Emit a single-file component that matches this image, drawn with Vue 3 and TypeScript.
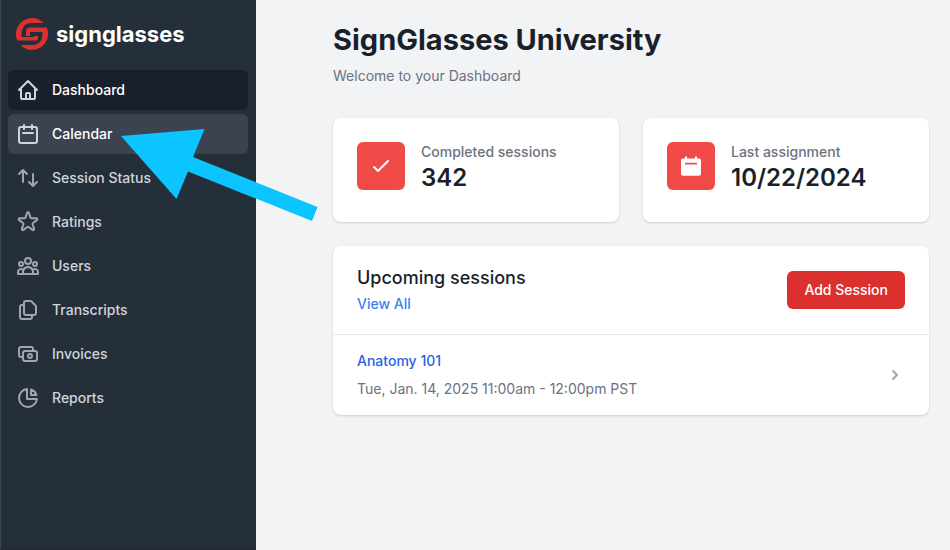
<script setup lang="ts">
interface NavItem {
  label: string
  state?: 'active' | 'highlighted'
  paths: string[]
}

interface Session {
  name: string
  time: string
}

const navItems: NavItem[] = [
  {
    label: 'Dashboard',
    state: 'active',
    paths: [
      'M3 12l2-2m0 0l7-7 7 7M5 10v10a1 1 0 001 1h3m10-11l2 2m-2-2v10a1 1 0 01-1 1h-3m-6 0a1 1 0 001-1v-4a1 1 0 011-1h2a1 1 0 011 1v4a1 1 0 001 1m-6 0h6',
    ],
  },
  {
    label: 'Calendar',
    state: 'highlighted',
    paths: [
      'M8 7V3m8 4V3m-9 8h10M5 21h14a2 2 0 002-2V7a2 2 0 00-2-2H5a2 2 0 00-2 2v12a2 2 0 002 2z',
    ],
  },
  {
    label: 'Session Status',
    paths: ['M7 16V4m0 0L3 8m4-4l4 4m6 0v12m0 0l4-4m-4 4l-4-4'],
  },
  {
    label: 'Ratings',
    paths: [
      'M11.049 2.927c.3-.921 1.603-.921 1.902 0l1.519 4.674a1 1 0 00.95.69h4.915c.969 0 1.371 1.24.588 1.81l-3.976 2.888a1 1 0 00-.363 1.118l1.518 4.674c.3.922-.755 1.688-1.538 1.118l-3.976-2.888a1 1 0 00-1.176 0l-3.976 2.888c-.783.57-1.838-.197-1.538-1.118l1.518-4.674a1 1 0 00-.363-1.118l-3.976-2.888c-.784-.57-.38-1.81.588-1.81h4.914a1 1 0 00.951-.69l1.519-4.674z',
    ],
  },
  {
    label: 'Users',
    paths: [
      'M17 20h5v-2a3 3 0 00-5.356-1.857M17 20H7m10 0v-2c0-.656-.126-1.283-.356-1.857M7 20H2v-2a3 3 0 015.356-1.857M7 20v-2c0-.656.126-1.283.356-1.857m0 0a5.002 5.002 0 019.288 0M15 7a3 3 0 11-6 0 3 3 0 016 0zm6 3a2 2 0 11-4 0 2 2 0 014 0zM7 10a2 2 0 11-4 0 2 2 0 014 0z',
    ],
  },
  {
    label: 'Transcripts',
    paths: [
      'M8 7v8a2 2 0 002 2h6M8 7V5a2 2 0 012-2h4.586a1 1 0 01.707.293l4.414 4.414a1 1 0 01.293.707V15a2 2 0 01-2 2h-2M8 7H6a2 2 0 00-2 2v10a2 2 0 002 2h8a2 2 0 002-2v-2',
    ],
  },
  {
    label: 'Invoices',
    paths: [
      'M17 9V7a2 2 0 00-2-2H5a2 2 0 00-2 2v6a2 2 0 002 2h2m2 4h10a2 2 0 002-2v-6a2 2 0 00-2-2H9a2 2 0 00-2 2v6a2 2 0 002 2zm7-5a2 2 0 11-4 0 2 2 0 014 0z',
    ],
  },
  {
    label: 'Reports',
    paths: [
      'M11 3.055A9.001 9.001 0 1020.945 13H11V3.055z',
      'M20.488 9H15V3.512A9.025 9.025 0 0120.488 9z',
    ],
  },
]

const sessions: Session[] = [
  { name: 'Anatomy 101', time: 'Tue, Jan. 14, 2025 11:00am - 12:00pm PST' },
]
</script>

<template>
  <div class="app">
    <aside class="sidebar">
      <a class="brand" href="#">
        <svg class="brand-mark" viewBox="0 0 32 32" aria-hidden="true">
          <path d="M27 4.500A16 16 0 0 0 1.300 22.500H20Q22 22.500 22 20.500V18H18V19H5.500V16Q6 5 16 5H27Z" />
          <path d="M5 27.500A16 16 0 0 0 30.700 9.500H14Q10 9.500 10 13.500V18H14V14H26.500V16Q26 27 16 27H5Z" />
        </svg>
        <span class="brand-name">signglasses</span>
      </a>
      <nav class="nav">
        <a v-for="item in navItems" :key="item.label" href="#" class="nav-item" :class="item.state">
          <svg class="nav-icon" viewBox="0 0 24 24" aria-hidden="true">
            <path v-for="d in item.paths" :key="d" :d="d" />
          </svg>
          <span>{{ item.label }}</span>
        </a>
      </nav>
    </aside>

    <main class="main">
      <header class="page-head">
        <h1>SignGlasses University</h1>
        <p>Welcome to your Dashboard</p>
      </header>

      <div class="stats">
        <section class="card stat">
          <div class="stat-icon">
            <svg viewBox="0 0 24 24" aria-hidden="true">
              <path class="line" d="M5 13l4 4L19 7" />
            </svg>
          </div>
          <dl>
            <dt>Completed sessions</dt>
            <dd>342</dd>
          </dl>
        </section>
        <section class="card stat">
          <div class="stat-icon">
            <svg viewBox="0 0 24 24" aria-hidden="true">
              <path class="solid" d="M6 3.300a1 1 0 012 0v1.300h8V3.300a1 1 0 012 0v1.300h2a2 2 0 012 2V19.700a2 2 0 01-2 2H4a2 2 0 01-2-2V6.600a2 2 0 012-2h2zM6 8.700v1.800h12V8.700z" />
            </svg>
          </div>
          <dl>
            <dt>Last assignment</dt>
            <dd>10/22/2024</dd>
          </dl>
        </section>
      </div>

      <section class="card">
        <div class="card-head">
          <div>
            <h2>Upcoming sessions</h2>
            <a class="view-all" href="#">View All</a>
          </div>
          <button type="button" class="add">Add Session</button>
        </div>
        <a v-for="session in sessions" :key="session.name" class="session" href="#">
          <div>
            <div class="session-name">{{ session.name }}</div>
            <div class="session-time">{{ session.time }}</div>
          </div>
          <svg class="chevron" viewBox="0 0 20 20" aria-hidden="true">
            <path d="M7.293 14.707a1 1 0 010-1.414L10.586 10 7.293 6.707a1 1 0 011.414-1.414l4 4a1 1 0 010 1.414l-4 4a1 1 0 01-1.414 0z" />
          </svg>
        </a>
      </section>
    </main>

    <svg class="pointer" viewBox="0 0 198 93" aria-hidden="true">
      <path d="M1 8L84.500 1L73 29L197.500 79L192 93L68 43.500L56.500 71Z" />
    </svg>
  </div>
</template>

<style>
body {
  margin: 0;
}
</style>

<style scoped>
.app {
  position: relative;
  display: flex;
  min-height: 100vh;
  background: #f2f3f5;
  color: #1a1f2c;
  font-family: Inter, "Liberation Sans", sans-serif;
  font-size: 14px;
  line-height: 20px;
}

a {
  color: inherit;
  text-decoration: none;
}

.sidebar {
  box-sizing: border-box;
  flex: 0 0 256px;
  padding: 18px 8px 0 7px;
  border-left: 1px solid #3b4451;
  border-bottom: 2px solid #242a38;
  background: #252f3a;
}

.brand {
  display: flex;
  align-items: center;
  gap: 8px;
  padding: 0 8px;
  color: #fff;
}

.brand-mark {
  width: 32px;
  height: 32px;
  fill: #dc302e;
}

.brand-name {
  font-size: 22px;
  font-weight: 700;
  line-height: 32px;
}

.nav {
  display: grid;
  gap: 4px;
  margin-top: 20px;
}

.nav-item {
  display: flex;
  align-items: center;
  gap: 12px;
  padding: 8px;
  border-radius: 6px;
  color: #d0d5db;
  font-weight: 500;
  line-height: 24px;
}

.nav-icon {
  width: 24px;
  height: 24px;
  fill: none;
  stroke: #9fa5b1;
  stroke-width: 2;
  stroke-linecap: round;
  stroke-linejoin: round;
}

.active {
  background: #1a1f2c;
  color: #fff;
}

.highlighted {
  background: #3b4351;
  color: #fff;
}

.active .nav-icon,
.highlighted .nav-icon {
  stroke: #d0d5db;
}

.main {
  flex: 1;
  min-width: 0;
  padding: 22px 21px 24px 77px;
}

h1,
h2,
p,
dl,
dd {
  margin: 0;
}

h1 {
  font-size: 29px;
  font-weight: 700;
  line-height: 36px;
}

.page-head p {
  margin-top: 8px;
  color: #6b7280;
}

.stats {
  display: grid;
  grid-template-columns: 1fr 1fr;
  gap: 24px;
  margin: 32px 0 24px;
}

.card {
  border-radius: 8px;
  background: #fff;
  box-shadow: 0 1px 3px rgba(0, 0, 0, 0.1), 0 1px 2px rgba(0, 0, 0, 0.06);
}

.stat {
  display: flex;
  align-items: flex-start;
  gap: 16px;
  padding: 24px 24px 28px;
}

.stat-icon {
  display: flex;
  padding: 12px;
  border-radius: 6px;
  background: #ef4a48;
}

.stat-icon svg {
  width: 24px;
  height: 24px;
}

.line {
  fill: none;
  stroke: #fff;
  stroke-width: 2;
  stroke-linecap: round;
  stroke-linejoin: round;
}

.solid {
  fill: #fff;
  fill-rule: evenodd;
}

dt {
  color: #6b7280;
  font-weight: 500;
}

dd {
  font-size: 24px;
  font-weight: 600;
  line-height: 32px;
}

.card-head {
  display: flex;
  align-items: center;
  justify-content: space-between;
  padding: 20px 24px;
  border-bottom: 1px solid #e5e7eb;
}

h2 {
  font-size: 18px;
  font-weight: 500;
  line-height: 24px;
}

.view-all {
  display: block;
  margin-top: 4px;
  color: #3b82f6;
  font-weight: 500;
}

.add {
  padding: 9px 17px;
  border: 0;
  border-radius: 6px;
  background: #dc302e;
  color: #fff;
  font: inherit;
  font-weight: 500;
}

.session {
  display: flex;
  align-items: center;
  justify-content: space-between;
  padding: 16px 24px;
}

.session-name {
  color: #2563eb;
  font-weight: 500;
}

.session-time {
  margin-top: 8px;
  color: #6b7280;
}

.chevron {
  width: 20px;
  height: 20px;
  fill: #9fa5b1;
}

.pointer {
  position: absolute;
  top: 128px;
  left: 120px;
  width: 198px;
  height: 93px;
  fill: #0cc4ff;
  pointer-events: none;
}
</style>
